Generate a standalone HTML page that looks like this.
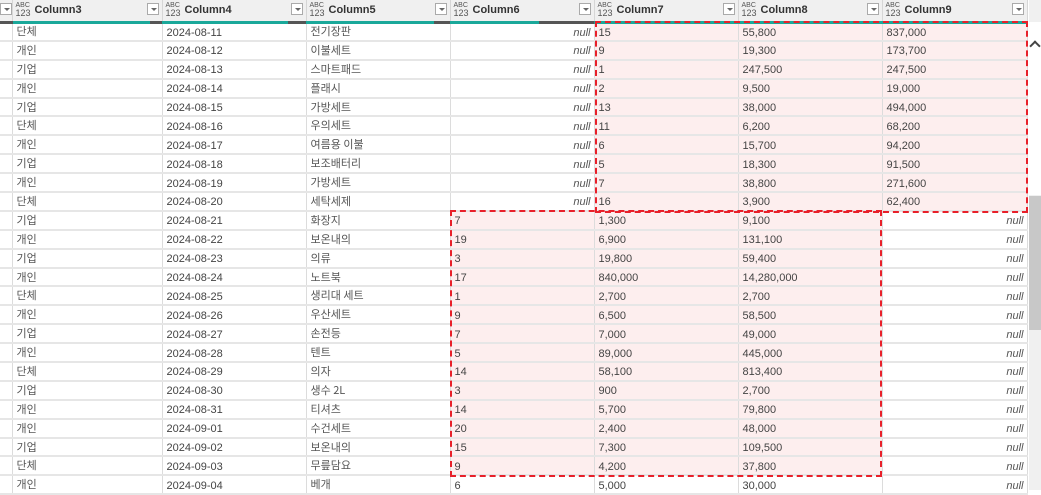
<!DOCTYPE html>
<html><head><meta charset="utf-8"><style>
body{margin:0;width:1041px;height:490px;overflow:hidden;background:#fff;font-family:"Liberation Sans","Noto Sans CJK KR",sans-serif;font-size:11px;color:#444;position:relative}
table{border-collapse:collapse;table-layout:fixed;position:absolute;left:0;top:0}
tr{height:18.9px}
td{border-right:1px solid #dcdcdc;border-bottom:2px solid #e6e6e6;padding:3px 0 0 4px;white-space:nowrap;overflow:hidden;line-height:13px;vertical-align:middle;box-sizing:border-box}
th{height:19px;background:#f0f0f0;border-right:1px solid #d6d6d6;padding:0;text-align:left;position:relative;font-weight:bold;color:#333;font-size:11px;border-bottom:3px solid #1aa89a}
.k{font-family:"Noto Sans CJK KR","Liberation Sans",sans-serif;color:#555;font-size:11px;padding-top:0}
.n{text-align:right;font-style:italic;padding-right:3px;color:#555}
.p{background:#fdeeee}
.ic{position:absolute;left:3px;top:2px;font-size:7px;line-height:7px;font-weight:normal;color:#555}
.ic b{font-size:9px;font-weight:normal;display:block;line-height:9px}
.ht{position:absolute;left:22px;top:4px}
.dd{position:absolute;right:3px;top:3px;width:12px;height:12px;background:#fff;border:1px solid #aaa;box-sizing:border-box}
.dd:after{content:"";position:absolute;left:3px;top:4px;border-left:3px solid transparent;border-right:3px solid transparent;border-top:3px solid #666}
.gb{position:absolute;right:0;bottom:-3px;height:3px;background:#555}
.box{position:absolute;border:2px dashed #e8202a;box-sizing:border-box}
</style></head><body>
<table>
<colgroup><col style="width:12px"><col style="width:150px"><col style="width:144px"><col style="width:144px"><col style="width:144px"><col style="width:144px"><col style="width:144px"><col style="width:145px"></colgroup>
<tr style="height:22px">
<th style="border-bottom-color:#555"><div class="dd" style="right:0"></div></th>
<th><span class="ic">ABC<b>123</b></span><span class="ht">Column3</span><div class="dd"></div><div class="gb" style="width:12px"></div></th>
<th><span class="ic">ABC<b>123</b></span><span class="ht">Column4</span><div class="dd"></div><div class="gb" style="width:18px"></div></th>
<th><span class="ic">ABC<b>123</b></span><span class="ht">Column5</span><div class="dd"></div><div class="gb" style="width:16px"></div></th>
<th><span class="ic">ABC<b>123</b></span><span class="ht">Column6</span><div class="dd"></div><div class="gb" style="width:55px"></div></th>
<th><span class="ic">ABC<b>123</b></span><span class="ht">Column7</span><div class="dd"></div></th>
<th><span class="ic">ABC<b>123</b></span><span class="ht">Column8</span><div class="dd"></div></th>
<th><span class="ic">ABC<b>123</b></span><span class="ht">Column9</span><div class="dd"></div></th>
</tr>
<tr><td></td><td class="k">단체</td><td>2024-08-11</td><td class="k">전기장판</td><td class="n">null</td><td class="p">15</td><td class="p">55,800</td><td class="p">837,000</td></tr>
<tr><td></td><td class="k">개인</td><td>2024-08-12</td><td class="k">이불세트</td><td class="n">null</td><td class="p">9</td><td class="p">19,300</td><td class="p">173,700</td></tr>
<tr><td></td><td class="k">기업</td><td>2024-08-13</td><td class="k">스마트패드</td><td class="n">null</td><td class="p">1</td><td class="p">247,500</td><td class="p">247,500</td></tr>
<tr><td></td><td class="k">개인</td><td>2024-08-14</td><td class="k">플래시</td><td class="n">null</td><td class="p">2</td><td class="p">9,500</td><td class="p">19,000</td></tr>
<tr><td></td><td class="k">기업</td><td>2024-08-15</td><td class="k">가방세트</td><td class="n">null</td><td class="p">13</td><td class="p">38,000</td><td class="p">494,000</td></tr>
<tr><td></td><td class="k">단체</td><td>2024-08-16</td><td class="k">우의세트</td><td class="n">null</td><td class="p">11</td><td class="p">6,200</td><td class="p">68,200</td></tr>
<tr><td></td><td class="k">개인</td><td>2024-08-17</td><td class="k">여름용 이불</td><td class="n">null</td><td class="p">6</td><td class="p">15,700</td><td class="p">94,200</td></tr>
<tr><td></td><td class="k">기업</td><td>2024-08-18</td><td class="k">보조배터리</td><td class="n">null</td><td class="p">5</td><td class="p">18,300</td><td class="p">91,500</td></tr>
<tr><td></td><td class="k">개인</td><td>2024-08-19</td><td class="k">가방세트</td><td class="n">null</td><td class="p">7</td><td class="p">38,800</td><td class="p">271,600</td></tr>
<tr><td></td><td class="k">단체</td><td>2024-08-20</td><td class="k">세탁세제</td><td class="n">null</td><td class="p">16</td><td class="p">3,900</td><td class="p">62,400</td></tr>
<tr><td></td><td class="k">기업</td><td>2024-08-21</td><td class="k">화장지</td><td class="p">7</td><td class="p">1,300</td><td class="p">9,100</td><td class="n">null</td></tr>
<tr><td></td><td class="k">개인</td><td>2024-08-22</td><td class="k">보온내의</td><td class="p">19</td><td class="p">6,900</td><td class="p">131,100</td><td class="n">null</td></tr>
<tr><td></td><td class="k">기업</td><td>2024-08-23</td><td class="k">의류</td><td class="p">3</td><td class="p">19,800</td><td class="p">59,400</td><td class="n">null</td></tr>
<tr><td></td><td class="k">개인</td><td>2024-08-24</td><td class="k">노트북</td><td class="p">17</td><td class="p">840,000</td><td class="p">14,280,000</td><td class="n">null</td></tr>
<tr><td></td><td class="k">단체</td><td>2024-08-25</td><td class="k">생리대 세트</td><td class="p">1</td><td class="p">2,700</td><td class="p">2,700</td><td class="n">null</td></tr>
<tr><td></td><td class="k">개인</td><td>2024-08-26</td><td class="k">우산세트</td><td class="p">9</td><td class="p">6,500</td><td class="p">58,500</td><td class="n">null</td></tr>
<tr><td></td><td class="k">기업</td><td>2024-08-27</td><td class="k">손전등</td><td class="p">7</td><td class="p">7,000</td><td class="p">49,000</td><td class="n">null</td></tr>
<tr><td></td><td class="k">개인</td><td>2024-08-28</td><td class="k">텐트</td><td class="p">5</td><td class="p">89,000</td><td class="p">445,000</td><td class="n">null</td></tr>
<tr><td></td><td class="k">단체</td><td>2024-08-29</td><td class="k">의자</td><td class="p">14</td><td class="p">58,100</td><td class="p">813,400</td><td class="n">null</td></tr>
<tr><td></td><td class="k">기업</td><td>2024-08-30</td><td class="k">생수 2L</td><td class="p">3</td><td class="p">900</td><td class="p">2,700</td><td class="n">null</td></tr>
<tr><td></td><td class="k">개인</td><td>2024-08-31</td><td class="k">티셔츠</td><td class="p">14</td><td class="p">5,700</td><td class="p">79,800</td><td class="n">null</td></tr>
<tr><td></td><td class="k">개인</td><td>2024-09-01</td><td class="k">수건세트</td><td class="p">20</td><td class="p">2,400</td><td class="p">48,000</td><td class="n">null</td></tr>
<tr><td></td><td class="k">기업</td><td>2024-09-02</td><td class="k">보온내의</td><td class="p">15</td><td class="p">7,300</td><td class="p">109,500</td><td class="n">null</td></tr>
<tr><td></td><td class="k">단체</td><td>2024-09-03</td><td class="k">무릎담요</td><td class="p">9</td><td class="p">4,200</td><td class="p">37,800</td><td class="n">null</td></tr>
<tr><td></td><td class="k">개인</td><td>2024-09-04</td><td class="k">베개</td><td>6</td><td>5,000</td><td>30,000</td><td class="n">null</td></tr>
</table>
<div class="box" style="left:595px;top:21px;width:433px;height:192px"></div>
<div class="box" style="left:450px;top:210px;width:432px;height:267px"></div>
<div style="position:absolute;left:1029px;top:0;width:12px;height:490px;background:#f0f0f0"></div>
<div style="position:absolute;left:1029px;top:22px;width:12px;height:173px;background:#fff"></div>
<div style="position:absolute;left:1031px;top:42px;width:6px;height:6px;border-left:2px solid #444;border-top:2px solid #444;transform:rotate(45deg)"></div>
<div style="position:absolute;left:1029px;top:196px;width:12px;height:134px;background:#c8c8c8"></div>
</body></html>
